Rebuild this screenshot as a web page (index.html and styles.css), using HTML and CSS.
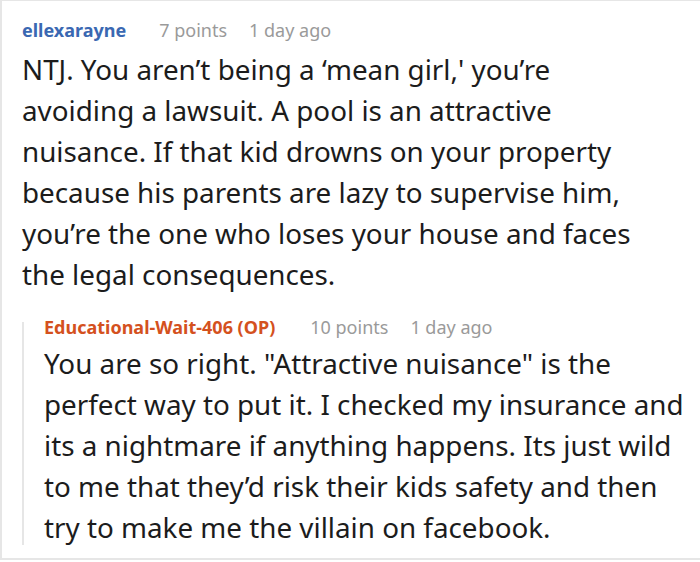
FILE: index.html
```html
<!DOCTYPE html>
<html>
<head>
<meta charset="utf-8">
<link rel="stylesheet" href="styles.css">
</head>
<body>
<div class="thread">
  <div class="comment">
    <div class="meta">
      <span class="user">ellexarayne</span>
      <span class="info">7 points</span>
      <span class="info">1 day ago</span>
    </div>
    <p class="body">NTJ. You aren’t being a ‘mean girl,' you’re<br>avoiding a lawsuit. A pool is an attractive<br>nuisance. If that kid drowns on your property<br>because his parents are lazy to supervise him,<br>you’re the one who loses your house and faces<br>the legal consequences.</p>
    <div class="reply">
      <div class="meta">
        <span class="user op">Educational-Wait-406 (OP)</span>
        <span class="info">10 points</span>
        <span class="info">1 day ago</span>
      </div>
      <p class="body">You are so right. "Attractive nuisance" is the<br>perfect way to put it. I checked my insurance and<br>its a nightmare if anything happens. Its just wild<br>to me that they’d risk their kids safety and then<br>try to make me the villain on facebook.</p>
    </div>
  </div>
</div>
</body>
</html>
```
FILE: styles.css
```css
html, body {
  margin: 0;
  padding: 0;
  background: #ffffff;
}
.thread {
  width: 700px;
  height: 560px;
  box-sizing: border-box;
  border-top: 1px solid #e6e6e6;
  border-left: 2px solid #e6e6e6;
  border-bottom: 2px solid #e6e6e6;
  font-family: "Noto Sans", "Open Sans", sans-serif;
  overflow: hidden;
}
.comment {
  padding: 17px 0 0 20px;
}
.meta {
  display: flex;
  gap: 22px;
  font-size: 18px;
  line-height: 24px;
  white-space: nowrap;
}
.user {
  color: #3a68b2;
  font-weight: 700;
  margin-right: 11px;
}
.user.op {
  color: #d4511e;
  margin-right: 13px;
}
.info {
  color: #9a9a9a;
}
.body {
  margin: 7px 0 0;
  font-size: 27.8px;
  line-height: 41px;
  color: #1c1c1c;
  white-space: nowrap;
}
.reply {
  margin-top: 20px;
  padding: 0 0 0 22px;
  background: linear-gradient(#e6e6e6, #e6e6e6) no-repeat 0 7px / 2px calc(100% - 10px);
}
.reply .body {
  margin-top: 4px;
  margin-bottom: 0;
}
```
